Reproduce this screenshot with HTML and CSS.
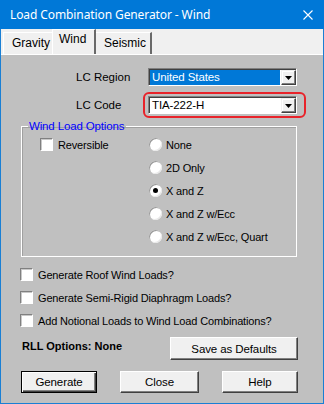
FILE: index.html
```html
<!DOCTYPE html>
<html>
<head>
<meta charset="utf-8">
<link rel="stylesheet" href="styles.css">
</head>
<body>
<div class="window">
  <div class="titlebar">
    <span class="title">Load Combination Generator - Wind</span>
    <svg class="close" width="10" height="10" viewBox="0 0 10 10"><path d="M0.5 0.5 L9.5 9.5 M9.5 0.5 L0.5 9.5" stroke="#fff" stroke-width="1.1" fill="none"/></svg>
  </div>
  <div class="tabstrip">
    <div class="tab">Gravity</div>
    <div class="tab active">Wind</div>
    <div class="tab">Seismic</div>
  </div>
  <div class="page">
    <div class="field-row">
      <span class="field-label">LC Region</span>
      <div class="combo">
        <span class="combo-text selected">United States</span>
        <span class="combo-btn"><svg width="7" height="4" viewBox="0 0 7 4"><path d="M0 0 H7 L3.5 4 Z" fill="#000"/></svg></span>
      </div>
    </div>
    <div class="field-row second">
      <span class="field-label">LC Code</span>
      <div class="combo highlighted">
        <span class="combo-text">TIA-222-H</span>
        <span class="combo-btn"><svg width="7" height="4" viewBox="0 0 7 4"><path d="M0 0 H7 L3.5 4 Z" fill="#000"/></svg></span>
        <span class="ring"></span>
      </div>
    </div>
    <fieldset class="group">
      <legend>Wind Load Options</legend>
      <div class="group-grid">
        <div class="opt"><span class="check"></span><span>Reversible</span></div>
        <div class="radios">
          <div class="opt"><span class="radio"></span><span>None</span></div>
          <div class="opt"><span class="radio"></span><span>2D Only</span></div>
          <div class="opt"><span class="radio on"></span><span>X and Z</span></div>
          <div class="opt"><span class="radio"></span><span>X and Z w/Ecc</span></div>
          <div class="opt"><span class="radio"></span><span>X and Z w/Ecc, Quart</span></div>
        </div>
      </div>
    </fieldset>
    <div class="checks">
      <div class="opt"><span class="check"></span><span>Generate Roof Wind Loads?</span></div>
      <div class="opt"><span class="check"></span><span>Generate Semi-Rigid Diaphragm Loads?</span></div>
      <div class="opt"><span class="check"></span><span>Add Notional Loads to Wind Load Combinations?</span></div>
    </div>
    <div class="rll-row">
      <span class="rll">RLL Options: None</span>
      <button class="btn save">Save as Defaults</button>
    </div>
    <div class="btn-row">
      <button class="btn default">Generate</button>
      <button class="btn">Close</button>
      <button class="btn">Help</button>
    </div>
  </div>
</div>
</body>
</html>
```

FILE: styles.css
```css
* { box-sizing: border-box; }
html, body { margin: 0; padding: 0; }
body { background: #fff; }

.window {
  width: 324px;
  height: 404px;
  border: 1px solid #1a7fd4;
  border-top: none;
  background: #c0c0c0;
  font-family: "Liberation Sans", Arial, sans-serif;
  font-size: 11px;
  letter-spacing: -0.15px;
  color: #000;
  display: flex;
  flex-direction: column;
}

.titlebar {
  height: 29px;
  margin: 0 -1px;
  background: #0078d7;
  color: #fff;
  display: flex;
  align-items: center;
  justify-content: space-between;
  padding: 0 11px 0 10px;
  flex: none;
}
.title {
  font-family: "Noto Sans", "Liberation Sans", sans-serif;
  font-size: 12px;
  letter-spacing: -0.1px;
}

.tabstrip {
  height: 26px;
  background: #f0f0f0;
  display: flex;
  align-items: flex-end;
  padding-left: 2px;
  flex: none;
  border-bottom: 1px solid #fff;
}
.tab {
  height: 22px;
  padding: 0 7px 0 8px;
  font-size: 12px;
  letter-spacing: 0;
  line-height: 20px;
  border-top: 1px solid #fff;
  border-left: 1px solid #fff;
  border-right: 2px solid #696969;
  background: #f0f0f0;
}
.tab:first-child { border-right: none; width: 49px; }
.tab.active {
  height: 25px;
  width: 44px;
  padding: 0 0 0 6px;
  line-height: 18px;
  border-right: 2px solid #696969;
}
.tab:last-child { width: 56px; border-left: none; }

.page {
  flex: 1;
  padding: 13px 25px 0 19px;
  display: flex;
  flex-direction: column;
}

.field-row {
  display: flex;
  align-items: center;
  height: 18px;
}
.field-row.second { margin-top: 10px; }
.field-label {
  width: 128px;
  padding-left: 56px;
  font-size: 11.5px;
  letter-spacing: 0;
}

.combo {
  position: relative;
  width: 149px;
  height: 18px;
  background: #fff;
  border-top: 1px solid #808080;
  border-left: 1px solid #808080;
  border-right: 1px solid #fff;
  border-bottom: 1px solid #fff;
  box-shadow: inset 1px 1px 0 #404040;
  display: flex;
  padding: 1px 0 0 1px;
}
.combo-text {
  flex: 1;
  line-height: 14px;
  padding-left: 2px;
  margin: 0 1px 0 0;
  font-size: 11.5px;
  letter-spacing: -0.1px;
}
.combo-text.selected { background: #0078d7; color: #fff; }
.combo-btn {
  width: 15px;
  background: #f0f0f0;
  border-top: 1px solid #f0f0f0;
  border-left: 1px solid #f0f0f0;
  border-right: 1px solid #404040;
  border-bottom: 1px solid #404040;
  box-shadow: inset -1px -1px 0 #808080, inset 1px 1px 0 #fff;
  display: flex;
  align-items: center;
  justify-content: center;
}
.ring {
  position: absolute;
  left: -6px;
  right: -10px;
  top: -5px;
  bottom: -5px;
  border: 2px solid #e8232a;
  border-radius: 6px;
  pointer-events: none;
}

.group {
  margin: 6px 0 0 1px;
  width: 276px;
  border: 1px solid #fff;
  box-shadow: inset 1px 1px 0 #a0a0a0;
  padding: 0 0 8px 18px;
  min-width: 0;
}
.group legend {
  color: #0000ff;
  padding: 0 2px 0 1px;
  margin-left: -12px;
  font-size: 11.5px;
  letter-spacing: -0.15px;
  line-height: 13px;
}
.group-grid {
  display: grid;
  grid-template-columns: 109px 1fr;
  align-items: start;
}

.opt {
  display: flex;
  align-items: center;
  height: 23px;
  gap: 4px;
  white-space: nowrap;
}
.check {
  width: 13px;
  height: 13px;
  flex: none;
  background: #fff;
  border-top: 1px solid #808080;
  border-left: 1px solid #808080;
  border-right: 1px solid #fff;
  border-bottom: 1px solid #fff;
  box-shadow: inset 1px 1px 0 #c8c8c8;
}
.radio {
  width: 13px;
  height: 13px;
  flex: none;
  border-radius: 50%;
  background: #fff;
  box-shadow: inset 1px 1px 0 #9a9a9a, inset -1px -1px 0 #e8e8e8;
  position: relative;
}
.radio.on::after {
  content: "";
  position: absolute;
  left: 4px;
  top: 4px;
  width: 5px;
  height: 5px;
  border-radius: 50%;
  background: #000;
}
.opt .check + span { margin-left: 1px; }

.checks { margin-top: 6px; }

.rll-row {
  display: flex;
  justify-content: space-between;
  align-items: flex-start;
  margin-top: 5px;
}
.rll {
  font-weight: bold;
  font-size: 11px;
  letter-spacing: 0;
  margin: 3px 0 0 2px;
}

.btn {
  font-family: "Liberation Sans", Arial, sans-serif;
  font-size: 11.5px;
  letter-spacing: -0.1px;
  color: #000;
  background: #f0f0f0;
  height: 22px;
  padding: 0;
  border-top: 1px solid #fff;
  border-left: 1px solid #fff;
  border-right: 1px solid #404040;
  border-bottom: 1px solid #404040;
  box-shadow: inset -1px -1px 0 #808080;
}
.btn.save { width: 128px; height: 23px; }
.btn.default {
  border: 1px solid #000;
  box-shadow: inset 1px 1px 0 #fff, inset -1px -1px 0 #404040, inset -2px -2px 0 #808080;
}

.btn-row {
  display: flex;
  justify-content: space-between;
  margin-top: 11px;
  padding-left: 1px;
}
.btn-row .btn { width: 76px; }
.btn-row .btn:nth-child(2) { width: 79px; }
```
